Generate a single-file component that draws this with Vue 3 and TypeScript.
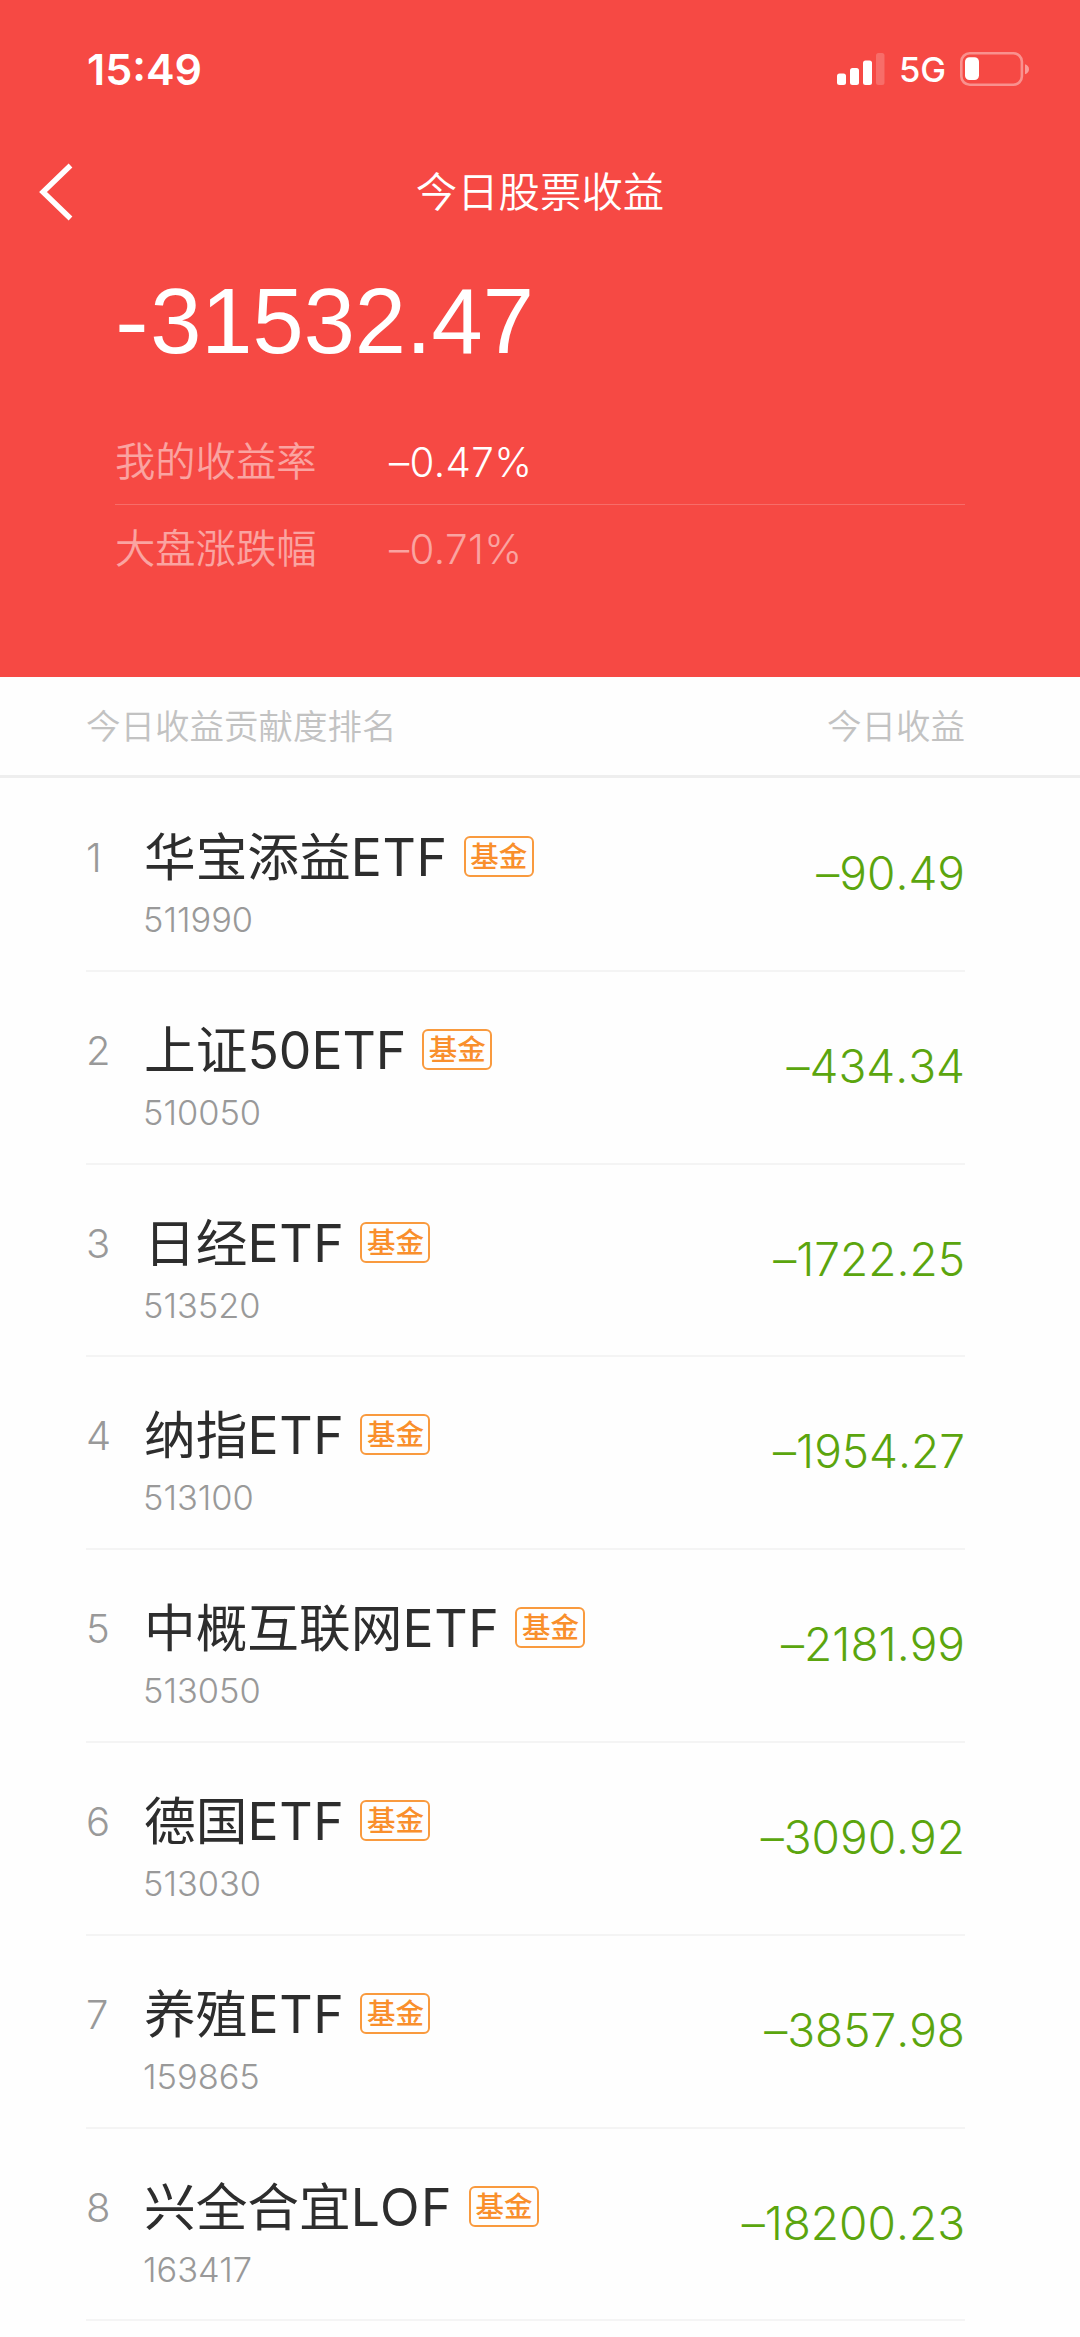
<script setup lang="ts">
interface Holding {
  name: string
  suffix: string
  tracking: number
  code: string
  profit: string
}

const holdings: Holding[] = [
  { name: '华宝添益', suffix: 'ETF', tracking: 0.7, code: '511990', profit: '–90.49' },
  { name: '上证', suffix: '50ETF', tracking: 0, code: '510050', profit: '–434.34' },
  { name: '日经', suffix: 'ETF', tracking: 0.7, code: '513520', profit: '–1722.25' },
  { name: '纳指', suffix: 'ETF', tracking: 0.7, code: '513100', profit: '–1954.27' },
  { name: '中概互联网', suffix: 'ETF', tracking: 0.7, code: '513050', profit: '–2181.99' },
  { name: '德国', suffix: 'ETF', tracking: 0.7, code: '513030', profit: '–3090.92' },
  { name: '养殖', suffix: 'ETF', tracking: 0.7, code: '159865', profit: '–3857.98' },
  { name: '兴全合宜', suffix: 'LOF', tracking: 1.5, code: '163417', profit: '–18200.23' },
]
</script>

<template>
  <main class="page">
    <header class="hero">
      <div class="status">
        <span class="time">15:49</span>
        <div class="indicators">
          <svg class="signal" width="40" height="32" viewBox="0 0 40 32" fill="#fff">
            <rect x="0" y="20.5" width="9" height="11.5" rx="2.5" />
            <rect x="13" y="15" width="9" height="17" rx="2.5" />
            <rect x="26" y="7.5" width="9" height="24.5" rx="2.5" />
            <rect x="39" y="0" width="8.5" height="32" rx="2.5" opacity=".2" />
          </svg>
          <span class="network">5G</span>
          <svg class="battery" width="70" height="34" viewBox="0 0 70 34">
            <rect x="1.3" y="1.3" width="60.6" height="31.4" rx="8.5" fill="none" stroke="#fff" stroke-opacity=".4" stroke-width="2.6" />
            <path d="M65 12.2c2.6.8 4 2.6 4 5s-1.4 4.200-4 5z" fill="#fff" fill-opacity=".45" />
            <rect x="5" y="5.300" width="14" height="22.800" rx="4.500" fill="#fff" />
          </svg>
        </div>
      </div>

      <nav class="navbar">
        <svg class="back" width="40" height="60" viewBox="0 0 40 60" fill="none" stroke="#fff" stroke-width="5.4">
          <path d="M34.500 3.500 7 30l27.500 26.500" />
        </svg>
        <h1 class="title">今日股票收益</h1>
      </nav>

      <div class="total"><span class="sign">-</span>31532.47</div>

      <dl class="rates">
        <div class="rate">
          <dt>我的收益率</dt>
          <dd>–0.47%</dd>
        </div>
        <div class="rate muted">
          <dt>大盘涨跌幅</dt>
          <dd>–0.71%</dd>
        </div>
      </dl>
    </header>

    <div class="columns">
      <span>今日收益贡献度排名</span>
      <span>今日收益</span>
    </div>

    <ol class="list">
      <li v-for="(item, index) in holdings" :key="item.code" class="row">
        <span class="rank">{{ index + 1 }}</span>
        <div class="info">
          <div class="heading">
            <span class="name">{{ item.name }}<span :style="{ letterSpacing: item.tracking + 'px' }">{{ item.suffix }}</span></span>
            <span class="tag">基金</span>
          </div>
          <span class="code">{{ item.code }}</span>
        </div>
        <span class="profit">{{ item.profit }}</span>
      </li>
    </ol>
  </main>
</template>

<style>
body {
  background: #fefefe;
}
</style>

<style scoped>
.page {
  width: 1080px;
  height: 2337px;
  overflow: hidden;
  background: #fefefe;
  font-family: Inter, "Noto Sans CJK SC", sans-serif;
  white-space: nowrap;
}

.hero {
  box-sizing: border-box;
  height: 677px;
  background: #f64944;
  color: #fff;
}

.status {
  display: flex;
  justify-content: space-between;
  align-items: center;
  height: 138px;
  padding: 0 50px 0 87px;
}

.time {
  font-size: 43px;
  font-weight: 600;
  line-height: 60px;
}

.indicators {
  display: flex;
  align-items: center;
}

.signal {
  overflow: visible;
  margin-right: 22px;
}

.network {
  width: 46px;
  margin-right: 15px;
  font-size: 34.500px;
  font-weight: 450;
  line-height: 60px;
  padding-top: 2px;
}

.navbar {
  display: grid;
  grid-template-columns: 120px 1fr 120px;
  align-items: center;
  height: 107px;
}

.back {
  margin-left: 36px;
}

.title {
  margin: 1px 0 0;
  font-size: 41.4px;
  font-weight: 350;
  line-height: 60px;
  text-align: center;
}

.total {
  height: 151px;
  padding-left: 115px;
  font: 400 92px/152px "Liberation Sans", sans-serif;
}

.sign {
  display: inline-block;
  margin-right: 4.5px;
  transform: scaleX(1.1);
  transform-origin: left;
}

.rates {
  margin: 22px 115px 0;
}

.rate {
  display: flex;
  height: 86px;
  font-size: 40.3px;
  font-weight: 350;
  line-height: 88px;
}

.rate + .rate {
  border-top: 1px solid rgba(255, 255, 255, 0.2);
}

dt {
  width: 274px;
  color: rgba(255, 255, 255, 0.5);
}

dd {
  margin: 0;
  padding-top: 1px;
  letter-spacing: 0.4px;
  font-variant-ligatures: no-contextual;
}

.muted dd {
  color: rgba(255, 255, 255, 0.5);
}

.columns {
  display: flex;
  justify-content: space-between;
  height: 98px;
  padding: 0 115px 0 86px;
  border-bottom: 3px solid #eee;
  color: #c2c2c2;
  font-size: 34.5px;
  font-weight: 350;
  line-height: 99px;
}

.list {
  margin: 0;
  padding: 1px 115px 0 86px;
  list-style: none;
}

.row {
  box-sizing: border-box;
  display: flex;
  height: 192.8px;
  border-bottom: 2px solid #f4f4f4;
}

.rank {
  width: 58px;
  padding-top: 48px;
  color: #999;
  font-size: 40px;
  font-weight: 350;
  line-height: 62px;
}

.info {
  display: flex;
  flex: 1;
  flex-direction: column;
  padding-top: 47px;
}

.heading {
  display: flex;
  align-items: center;
  height: 62px;
}

.name {
  color: #2d2d2d;
  font-size: 51.7px;
  font-weight: 375;
  line-height: 62px;
}

.tag {
  box-sizing: border-box;
  width: 70px;
  height: 41px;
  margin: -1px 0 0 16px;
  border: 2px solid #f99a3e;
  border-radius: 6px;
  color: #f98f2c;
  font-size: 28.5px;
  font-weight: 500;
  line-height: 37px;
  text-align: center;
}

.code {
  margin: 12px 0 0 -1px;
  color: #999;
  font-size: 34.4px;
  font-weight: 350;
  line-height: 40px;
}

.profit {
  padding-top: 63px;
  color: #5ba50e;
  font-size: 46px;
  font-weight: 350;
  font-kerning: none;
  font-variant-ligatures: no-contextual;
  line-height: 62px;
}
</style>
